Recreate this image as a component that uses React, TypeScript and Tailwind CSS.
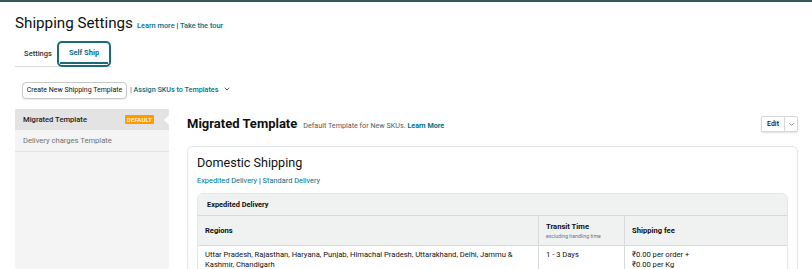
import { ChevronDown } from "lucide-react";

const link = "text-[#007185]";

export default function App() {
  return (
    <div className="h-[269px] w-[812px] overflow-hidden bg-white font-['Roboto',sans-serif] text-[#0f1111]">
      <div className="h-[2px] bg-[#37575c]" />

      <div className="pl-[15px] pr-[14px]">
        {/* Title */}
        <div className="mt-[11px] flex items-baseline gap-[4px]">
          <h1 className="text-[15.2px] leading-[20px]">Shipping Settings</h1>
          <span className="text-[7.4px] font-medium">
            <a className={link}>Learn more</a> <span className="text-[#0f1111]">|</span>{" "}
            <a className={link}>Take the tour</a>
          </span>
        </div>

        {/* Tabs */}
        <div className="mt-[8px] flex h-[26px] w-[96px] items-stretch border-b border-[#d5d9d9]">
          <div className="flex w-[42px] items-center justify-center pl-[4px] text-[7.5px] font-medium text-[#333]">
            Settings
          </div>
          <div className="-mb-px flex w-[54px] items-stretch rounded-[5px] border-2 border-[#1b6b76] px-[1px] pb-[1px]">
            <div className="flex flex-1 items-center justify-center border-b-2 border-[#1b6b76] text-[7.5px] font-bold text-[#007185]">
              Self Ship
            </div>
          </div>
        </div>

        {/* Actions */}
        <div className="mt-[15px] ml-[7px] flex items-center gap-[3px]">
          <button className="h-[17px] w-[105px] rounded-[4px] border border-[#c5c9c9] bg-white text-[7px] text-[#0f1111] shadow-[0_1px_1px_rgba(0,0,0,0.08)]">
            Create New Shipping Template
          </button>
          <span className="text-[7.2px] font-medium text-[#007185]">| Assign SKUs to Templates</span>
          <ChevronDown className="ml-[2px] -mt-[4px] h-[8px] w-[8px] text-[#333]" strokeWidth={2.5} />
        </div>

        {/* Body */}
        <div className="mt-[10px] flex gap-[18px]">
          {/* Sidebar */}
          <div className="h-[170px] w-[154px] shrink-0 bg-[#f4f4f4]">
            <div className="relative flex h-[21px] items-center justify-between bg-[#e3e3e3] pl-[8px] pr-[15px]">
              <span className="text-[7.6px] font-medium text-[#222]">Migrated Template</span>
              <span className="rounded-[1px] bg-[#ff9900] px-[2px] py-[1px] text-[6px] font-medium leading-[7px] tracking-wide text-white">
                DEFAULT
              </span>
              <span className="absolute right-0 top-[6px] h-0 w-0 border-y-[5px] border-r-[5px] border-y-transparent border-r-white" />
            </div>
            <div className="flex h-[22px] items-center border-b border-[#e3e3e3] pl-[8px] text-[7.6px] text-[#6f7373]">
              Delivery charges Template
            </div>
          </div>

          {/* Main */}
          <div className="min-w-0 flex-1">
            <div className="flex items-center justify-between pt-[6px]">
              <div className="flex items-baseline gap-[6px]">
                <h2 className="text-[13px] font-bold leading-[18px]">Migrated Template</h2>
                <span className="text-[7.2px] text-[#565959]">
                  Default Template for New SKUs. <a className="font-bold text-[#007185]">Learn More</a>
                </span>
              </div>
              <div className="flex h-[16px] items-stretch rounded-[2px] border border-[#d5d9d9] bg-white shadow-[0_1px_2px_rgba(0,0,0,0.12)]">
                <span className="flex w-[23px] items-center justify-center border-r border-[#d5d9d9] text-[7px] font-medium">
                  Edit
                </span>
                <span className="flex w-[12px] items-center justify-center">
                  <ChevronDown className="h-[7px] w-[7px] text-[#555]" strokeWidth={2.5} />
                </span>
              </div>
            </div>

            <div className="mt-[13px] rounded-[5px] border border-[#e3e6e6] px-[9px] pb-[10px] pt-[7px]">
              <h3 className="text-[12.6px] leading-[18px]">Domestic Shipping</h3>
              <div className="mt-[3px] text-[7.4px]">
                <a className={link}>Expedited Delivery</a> | <a className={link}>Standard Delivery</a>
              </div>

              <div className="mt-[7px] overflow-hidden rounded-t-[6px] border border-[#e3e6e6]">
                <div className="flex h-[21px] items-center bg-[#f0f2f2] px-[9px] text-[7.4px] font-bold">
                  Expedited Delivery
                </div>
                <div className="grid grid-cols-[341px_86px_1fr] border-t border-[#d5d9d9] text-[7.6px]">
                  <div className="flex h-[29px] items-center border-r border-[#d5d9d9] bg-[#f0f2f2] px-[7px] font-bold">
                    Regions
                  </div>
                  <div className="flex h-[29px] flex-col justify-center border-r border-[#d5d9d9] bg-[#f0f2f2] px-[7px]">
                    <span className="font-bold leading-[10px]">Transit Time</span>
                    <span className="text-[5.2px] leading-[8px] text-[#6f7373]">excluding handling time</span>
                  </div>
                  <div className="flex h-[29px] items-center bg-[#f0f2f2] px-[7px] font-bold">Shipping fee</div>

                  <div className="border-r border-t border-[#d5d9d9] px-[7px] pt-[4px] leading-[10px]">
                    Uttar Pradesh, Rajasthan, Haryana, Punjab, Himachal Pradesh, Uttarakhand, Delhi, Jammu &amp;
                    Kashmir, Chandigarh
                  </div>
                  <div className="border-r border-t border-[#d5d9d9] px-[7px] pt-[4px] leading-[10px]">1 - 3 Days</div>
                  <div className="border-t border-[#d5d9d9] px-[7px] pt-[4px] leading-[10px]">
                    <div>₹0.00 per order +</div>
                    <div>₹0.00 per Kg</div>
                  </div>
                </div>
              </div>
            </div>
          </div>
        </div>
      </div>
    </div>
  );
}
